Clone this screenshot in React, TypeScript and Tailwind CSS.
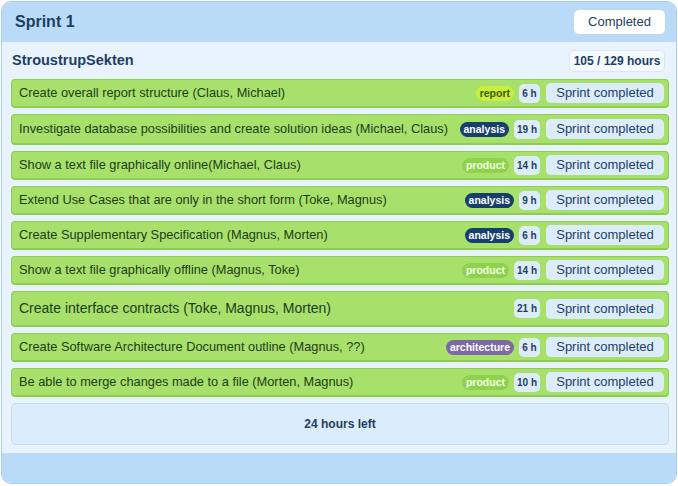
const tasks = [
  { title: "Create overall report structure (Claus, Michael)", tag: "report", hours: 6, h: "h-[29px]" },
  { title: "Investigate database possibilities and create solution ideas (Michael, Claus)", tag: "analysis", hours: 19, h: "h-[31px]" },
  { title: "Show a text file graphically online(Michael, Claus)", tag: "product", hours: 14, h: "h-[29px]" },
  { title: "Extend Use Cases that are only in the short form (Toke, Magnus)", tag: "analysis", hours: 9, h: "h-[29px]" },
  { title: "Create Supplementary Specification (Magnus, Morten)", tag: "analysis", hours: 6, h: "h-[29px]" },
  { title: "Show a text file graphically offline (Magnus, Toke)", tag: "product", hours: 14, h: "h-[29px]" },
  { title: "Create interface contracts (Toke, Magnus, Morten)", tag: "", hours: 21, h: "h-[36px]", big: true },
  { title: "Create Software Architecture Document outline (Magnus, ??)", tag: "architecture", hours: 6, h: "h-[29px]" },
  { title: "Be able to merge changes made to a file (Morten, Magnus)", tag: "product", hours: 10, h: "h-[29px]" },
];

const tagStyles: Record<string, string> = {
  report: "bg-[#c9ef3c] text-[#3d5a12]",
  analysis: "bg-[#173f6e] text-white",
  product: "bg-[#8fd24c] text-[#f4ffe6]",
  architecture: "bg-[#7d68a6] text-white",
};

function TaskRow({ task }: { task: (typeof tasks)[number] }) {
  return (
    <div
      className={`${task.h} mb-[6px] flex items-center rounded-[4px] border border-[#8ccd52] border-b-2 bg-[#a8e06c] pl-[7px] pr-[4px]`}
    >
      <p className={`flex-1 truncate text-[#1e3d19] ${task.big ? "text-[14px]" : "text-[12.8px]"}`}>
        {task.title}
      </p>
      {task.tag && (
        <span
          className={`${tagStyles[task.tag]} mr-[5px] rounded-full px-[4px] text-[10.5px] font-bold leading-[15px]`}
        >
          {task.tag}
        </span>
      )}
      <span className="mr-[6px] flex h-[19px] min-w-[21px] items-center justify-center rounded-[5px] bg-[#dcecfb] px-[3px] text-[10px] font-bold text-[#1d3f63]">
        {task.hours} h
      </span>
      <span className="flex h-[20px] w-[118px] items-center justify-center rounded-[5px] bg-[#dcecfb] text-[13px] text-[#1d3f63]">
        Sprint completed
      </span>
    </div>
  );
}

export default function App() {
  return (
    <div className="h-[486px] w-[678px] bg-white p-px font-['Liberation_Sans',Arial,sans-serif]">
      <div className="flex h-[483px] w-[676px] flex-col overflow-hidden rounded-[10px] border border-[#a9cdee] bg-[#e8f3fd]">
        <div className="flex h-[40px] shrink-0 items-center justify-between bg-[#b9dbf8] pl-[13px] pr-[11px]">
          <h1 className="text-[16px] font-bold text-[#1d3f63]">Sprint 1</h1>
          <span className="flex h-[24px] w-[91px] items-center justify-center rounded-[5px] bg-white text-[13px] text-[#1d3f63]">
            Completed
          </span>
        </div>
        <div className="flex-1 pl-[9px] pr-[7px] pt-[7px]">
          <div className="mb-[7px] flex h-[23px] items-center justify-between pl-[1px] pr-[4px]">
            <h2 className="text-[14.5px] font-bold text-[#1d3f63]">StroustrupSekten</h2>
            <span className="flex h-[22px] w-[96px] items-center justify-center rounded-[5px] border border-[#d8e8f6] bg-[#f5faff] text-[12px] font-bold text-[#1d3f63]">
              105 / 129 hours
            </span>
          </div>
          {tasks.map((t, i) => (
            <TaskRow key={i} task={t} />
          ))}
          <div className="flex h-[42px] items-center justify-center rounded-[5px] border border-[#c5dcef] bg-[#dbedfc] text-[12px] font-bold text-[#1d3f63]">
            24 hours left
          </div>
        </div>
        <div className="h-[30px] shrink-0 bg-[#b9dbf8]" />
      </div>
    </div>
  );
}
